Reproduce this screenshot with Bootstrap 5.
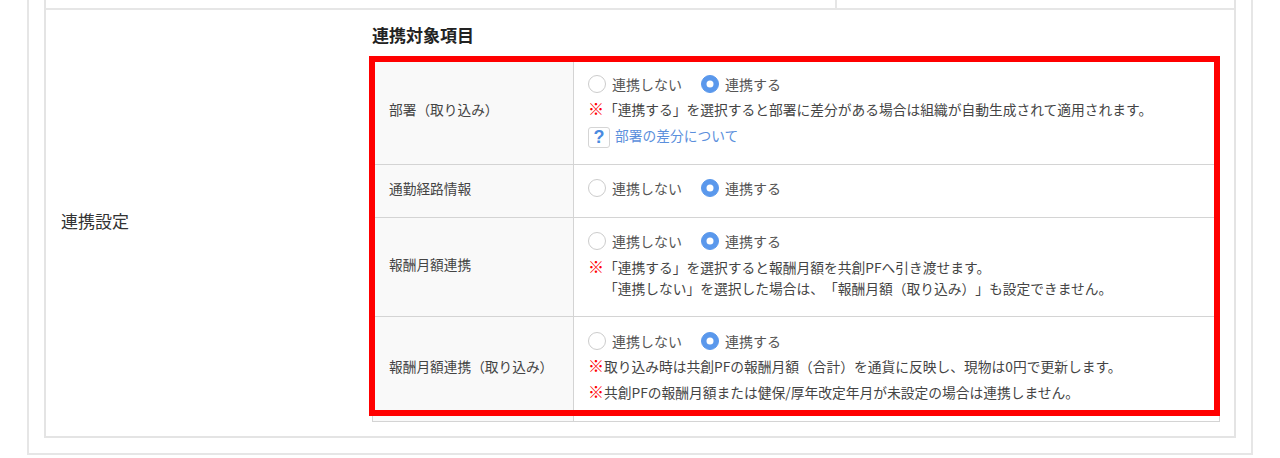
<!DOCTYPE html>
<html lang="ja">
<head>
<meta charset="utf-8">
<title>連携設定</title>
<link rel="stylesheet" href="https://cdn.jsdelivr.net/npm/bootstrap@5.3.0/dist/css/bootstrap.min.css">
<style>
html,body{height:458px;overflow:hidden;background:#fff;}
body{font-family:"Noto Sans CJK JP","Liberation Sans",sans-serif;color:#444;font-size:13.75px;text-spacing-trim:space-all;}
.outer-box{margin:0 27px;border:solid #e6e6e6;border-width:0 2px 2px 2px;height:455px;padding:0 15px;}
.inner-box{border:solid #e4e4e4;border-width:0 2px 2px 2px;height:438px;}
.top-row{height:10px;border-bottom:2px solid #e6e6e6;}
.top-cell{width:791px;height:8px;border-right:2px solid #e6e6e6;}
.setting-label{width:326px;padding-left:15px;font-size:17px;padding-top:9px;color:#333;}
.setting-body{width:848px;padding-top:13px;position:relative;}
.setting-title{font-size:17px;line-height:24px;margin:0 0 11px;font-weight:700;color:#222;height:24px;}
.link-table{width:848px;table-layout:fixed;margin:0;border-color:#d4d4d4;--bs-table-border-color:#d4d4d4;--bs-table-color:#444;}
.link-table th,.link-table td{padding:0;vertical-align:middle;font-weight:400;}
.link-table th{width:201px;background:#f9f9f9;font-size:13.7px;padding-left:16px;padding-bottom:5px;--bs-table-bg:#f9f9f9;}
.link-table td{padding-left:14px;}
.r1{height:106px;}.r2{height:53px;}.r3{height:99px;}.r4{height:105px;}
.link-table .r1 td{padding-bottom:3px;}
.link-table .r2 td{padding-bottom:6px;}
.link-table .r3 td{padding-bottom:6px;}
.link-table .r4 td{padding-bottom:7px;}
.radio-line{height:24px;font-size:14px;color:#555;margin-bottom:4px;}
.r1 .radio-line{margin-bottom:3px;}
.r2 .radio-line{margin-bottom:0;}
.r4 .radio-line{margin-bottom:3px;}
.radio-line .form-check{margin:0 19px 0 0;padding:0;display:flex;align-items:center;gap:6px;min-height:0;}
.radio-line .form-check-input{float:none;margin:0;width:18px;height:18px;border:1.5px solid #ccc;background-size:14px;}
.radio-line .form-check-input:checked{background-color:#5a98ec;border-color:#5a98ec;}
.radio-line .form-check-label{line-height:18px;}
.note-line{line-height:21px;height:21px;white-space:nowrap;color:#444;font-size:13.75px;}
.note-gap{margin-top:5px;}
.note-mark{color:#f00;font-weight:700;display:inline-block;width:16px;font-size:16px;line-height:1;}
.note-indent{padding-left:16px;}
.help-line{display:flex;align-items:center;gap:5px;height:22px;margin-top:6px;}
.help-mark{width:22px;height:21px;border:1.5px solid #d5d5d5;border-radius:3px;color:#4a8ae0;font-weight:700;font-size:18px;line-height:18px;text-align:center;font-family:"Liberation Sans",sans-serif;}
.help-link{color:#5b8fdc;text-decoration:none;font-size:13.75px;position:relative;top:-2px;}
.red-frame{position:absolute;left:-3px;top:46px;width:851px;height:360px;border:6px solid #f00;pointer-events:none;}
</style>
</head>
<body>
<div class="outer-box">
  <div class="inner-box">
    <div class="top-row"><div class="top-cell"></div></div>
    <div class="d-flex">
      <div class="setting-label d-flex align-items-center">連携設定</div>
      <div class="setting-body">
        <h2 class="setting-title">連携対象項目</h2>
        <table class="table table-bordered link-table">
          <tbody>
            <tr class="r1">
              <th scope="row">部署（取り込み）</th>
              <td>
                <div class="radio-line d-flex align-items-center">
                  <div class="form-check"><input class="form-check-input" type="radio" name="a" id="a1"><label class="form-check-label" for="a1">連携しない</label></div>
                  <div class="form-check"><input class="form-check-input" type="radio" name="a" id="a2" checked><label class="form-check-label" for="a2">連携する</label></div>
                </div>
                <div class="note-line"><span class="note-mark">※</span><span>「連携する」を選択すると部署に差分がある場合は組織が自動生成されて適用されます。</span></div>
                <div class="help-line"><span class="help-mark">?</span><a class="help-link" href="#">部署の差分について</a></div>
              </td>
            </tr>
            <tr class="r2">
              <th scope="row">通勤経路情報</th>
              <td>
                <div class="radio-line d-flex align-items-center">
                  <div class="form-check"><input class="form-check-input" type="radio" name="b" id="b1"><label class="form-check-label" for="b1">連携しない</label></div>
                  <div class="form-check"><input class="form-check-input" type="radio" name="b" id="b2" checked><label class="form-check-label" for="b2">連携する</label></div>
                </div>
              </td>
            </tr>
            <tr class="r3">
              <th scope="row">報酬月額連携</th>
              <td>
                <div class="radio-line d-flex align-items-center">
                  <div class="form-check"><input class="form-check-input" type="radio" name="c" id="c1"><label class="form-check-label" for="c1">連携しない</label></div>
                  <div class="form-check"><input class="form-check-input" type="radio" name="c" id="c2" checked><label class="form-check-label" for="c2">連携する</label></div>
                </div>
                <div class="note-line"><span class="note-mark">※</span><span>「連携する」を選択すると報酬月額を共創PFへ引き渡せます。</span></div>
                <div class="note-line note-indent"><span>「連携しない」を選択した場合は、「報酬月額（取り込み）」も設定できません。</span></div>
              </td>
            </tr>
            <tr class="r4">
              <th scope="row">報酬月額連携（取り込み）</th>
              <td>
                <div class="radio-line d-flex align-items-center">
                  <div class="form-check"><input class="form-check-input" type="radio" name="d" id="d1"><label class="form-check-label" for="d1">連携しない</label></div>
                  <div class="form-check"><input class="form-check-input" type="radio" name="d" id="d2" checked><label class="form-check-label" for="d2">連携する</label></div>
                </div>
                <div class="note-line"><span class="note-mark">※</span><span>取り込み時は共創PFの報酬月額（合計）を通貨に反映し、現物は0円で更新します。</span></div>
                <div class="note-line note-gap"><span class="note-mark">※</span><span>共創PFの報酬月額または健保/厚年改定年月が未設定の場合は連携しません。</span></div>
              </td>
            </tr>
          </tbody>
        </table>
        <div class="red-frame"></div>
      </div>
    </div>
  </div>
</div>
<script src="https://cdn.jsdelivr.net/npm/bootstrap@5.3.0/dist/js/bootstrap.bundle.min.js"></script>
</body>
</html>
